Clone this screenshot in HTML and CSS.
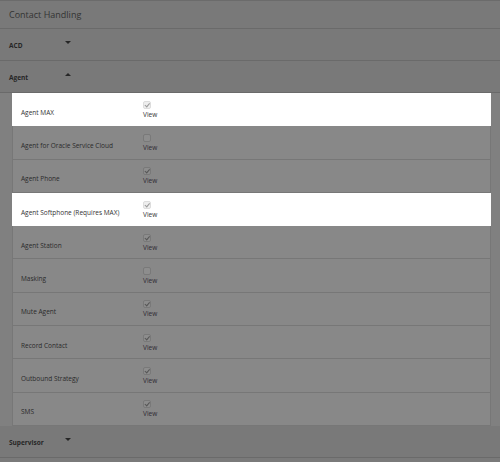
FILE: index.html
```html
<!DOCTYPE html>
<html lang="en">

<head>
    <meta charset="UTF-8">
    <title>Contact Handling Permissions</title>
    <link rel="stylesheet" href="styles.css">
</head>

<body>

    <div class="panel">
        <div class="panel-title">Contact Handling</div>

        <div class="group">
            <span class="group-name">ACD</span>
            <span class="caret down"></span>
        </div>

        <div class="group">
            <span class="group-name">Agent</span>
            <span class="caret up"></span>
        </div>

        <!-- Agent permissions -->
        <div class="perm-list">
            <div class="perm highlight">
                <div class="perm-name">Agent MAX</div>
                <label class="perm-check"><span class="box checked"></span>View</label>
            </div>
            <div class="perm">
                <div class="perm-name">Agent for Oracle Service Cloud</div>
                <label class="perm-check"><span class="box"></span>View</label>
            </div>
            <div class="perm">
                <div class="perm-name">Agent Phone</div>
                <label class="perm-check"><span class="box checked"></span>View</label>
            </div>
            <div class="perm highlight">
                <div class="perm-name">Agent Softphone (Requires MAX)</div>
                <label class="perm-check"><span class="box checked"></span>View</label>
            </div>
            <div class="perm">
                <div class="perm-name">Agent Station</div>
                <label class="perm-check"><span class="box checked"></span>View</label>
            </div>
            <div class="perm">
                <div class="perm-name">Masking</div>
                <label class="perm-check"><span class="box"></span>View</label>
            </div>
            <div class="perm">
                <div class="perm-name">Mute Agent</div>
                <label class="perm-check"><span class="box checked"></span>View</label>
            </div>
            <div class="perm">
                <div class="perm-name">Record Contact</div>
                <label class="perm-check"><span class="box checked"></span>View</label>
            </div>
            <div class="perm">
                <div class="perm-name">Outbound Strategy</div>
                <label class="perm-check"><span class="box checked"></span>View</label>
            </div>
            <div class="perm">
                <div class="perm-name">SMS</div>
                <label class="perm-check"><span class="box checked"></span>View</label>
            </div>
        </div>

        <div class="group">
            <span class="group-name">Supervisor</span>
            <span class="caret down"></span>
        </div>
    </div>

</body>

</html>
```

FILE: styles.css
```css
html, body {
    margin: 0;
    padding: 0;
    height: 100%;
    background-color: #7a7a7a;
    font-family: "Open Sans", "DejaVu Sans", sans-serif;
    color: #2e2e2e;
}

.panel {
    border-top: 1px solid #6b6b6b;
}

.panel-title {
    height: 27px;
    line-height: 27px;
    padding-left: 9px;
    font-size: 9px;
    color: #333;
    background-color: #797979;
    border-bottom: 1px solid #6a6a6a;
}

/* Collapsible group headers */
.group {
    display: flex;
    align-items: center;
    height: 31px;
    padding-left: 9px;
    background-color: #797979;
    border-bottom: 1px solid #6a6a6a;
}

.group-name {
    width: 56px;
    font-size: 6.5px;
    font-weight: bold;
    color: #262626;
    padding-top: 2px;
}

.caret {
    width: 0;
    height: 0;
    border-left: 3px solid transparent;
    border-right: 3px solid transparent;
}

.caret.down {
    border-top: 3px solid #262626;
    margin-top: -4px;
}

.caret.up {
    border-bottom: 3px solid #262626;
    margin-top: -4px;
}

/* Permission rows */
.perm-list {
    padding: 0 9px 0 12px;
    background-color: #808080;
}

.perm {
    display: flex;
    align-items: center;
    height: 32.3px;
    border-bottom: 1px solid #777;
    border-left: 1px solid #777;
    border-right: 1px solid #777;
    background-color: #888;
}

.perm.highlight {
    background-color: #fff;
    border-color: #fff;
}

.perm-name {
    width: 122px;
    padding-left: 8px;
    padding-top: 6px;
    font-size: 6.5px;
    color: #2a2a2a;
}

.perm-check {
    display: flex;
    flex-direction: column;
    font-size: 6.5px;
    color: #2f2a33;
    padding-top: 1px;
}

.highlight .perm-name,
.highlight .perm-check {
    color: #333;
}

.box {
    position: relative;
    width: 6px;
    height: 6px;
    margin-bottom: 1px;
    border: 1px solid #797979;
    border-radius: 2px;
    background-color: #8d8d8d;
}

.highlight .box {
    border-color: #ddd;
    background-color: #eee;
}

.box.checked::after {
    content: "";
    position: absolute;
    left: 2px;
    top: 0;
    width: 1.5px;
    height: 3.5px;
    border-right: 1px solid #555;
    border-bottom: 1px solid #555;
    transform: rotate(40deg);
}

.highlight .box.checked::after {
    border-color: #999;
}
```
